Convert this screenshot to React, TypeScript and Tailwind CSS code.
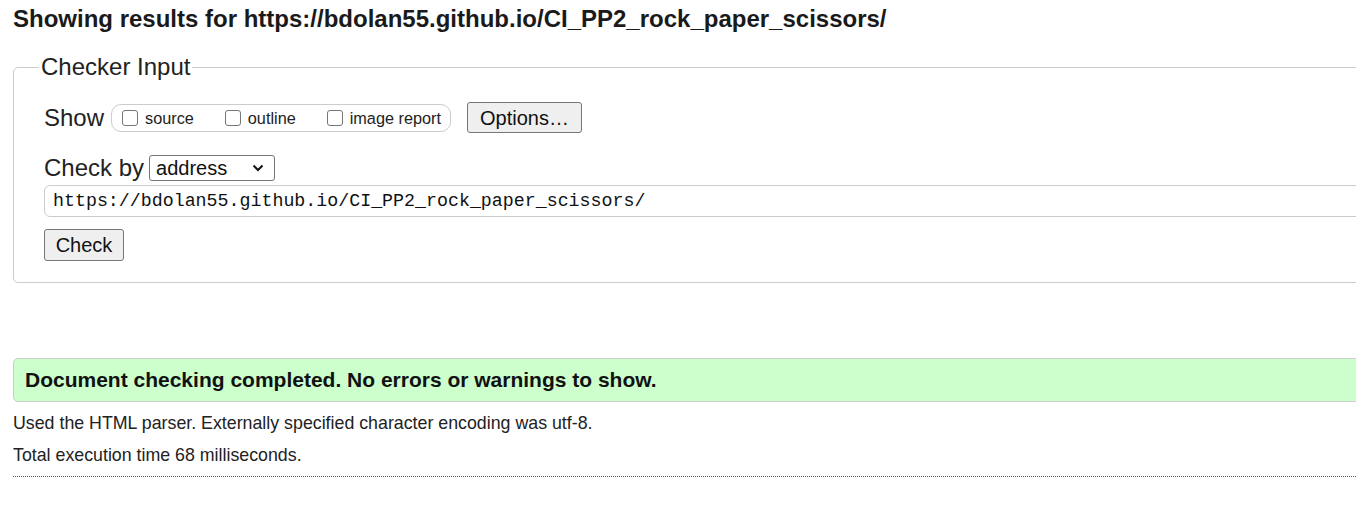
import React from 'react';

const Checkbox = ({ label }: { label: string }) => {
  return (
    <label className="flex items-end gap-[7px]">
      <span className="w-[16px] h-[16px] border border-[#767676] rounded-[3px] bg-white mb-[2px]"></span>
      <span className="text-[16.25px] leading-[20px] text-[#222]">{label}</span>
    </label>
  );
};

const App = () => {
  return (
    <div className="min-h-screen w-[1356px] overflow-hidden bg-white text-[#222] font-['Liberation_Sans',Arial,sans-serif]">
      <h1 className="pl-[13px] pt-[5px] text-[24px] leading-[28px] font-bold text-[#1a1a1a]">
        Showing results for https://bdolan55.github.io/CI_PP2_rock_paper_scissors/
      </h1>

      <fieldset className="ml-[13px] mt-[21px] w-[1380px] border border-[#ccc] rounded-[5px] pl-[30px] pr-4 pt-[22px] pb-[21px]">
        <legend className="-ml-[5px] px-[2px] text-[24px] leading-[26px]">Checker Input</legend>

        <div className="flex items-center">
          <span className="text-[24px] leading-[28px]">Show</span>
          <div className="ml-[7px] h-[28px] flex items-center gap-[31px] border border-[#ccc] rounded-[10px] pl-[10px] pr-[9px]">
            <Checkbox label="source" />
            <Checkbox label="outline" />
            <Checkbox label="image report" />
          </div>
          <button className="ml-[16px] h-[31px] px-[12px] bg-[#efefef] border border-[#767676] rounded-[3px] text-[20px] leading-[24px] text-[#111]">
            Options…
          </button>
        </div>

        <div className="flex items-center mt-[21px]">
          <span className="text-[24px] leading-[28px]">Check by</span>
          <div className="ml-[5px] w-[126px] h-[26px] flex items-center justify-between border border-[#767676] rounded-[3px] pl-[6px] pr-[10px] bg-white">
            <span className="text-[20px] leading-[22px] text-[#111]">address</span>
            <svg width="12" height="8" viewBox="0 0 12 8" fill="none">
              <path d="M1.5 1.5 L6 6 L10.5 1.5" stroke="#111" strokeWidth="2" />
            </svg>
          </div>
        </div>

        <div className="mt-[3px] h-[32px] flex items-center border border-[#ccc] rounded-[6px] pl-[8px]">
          <span className="font-['Liberation_Mono',monospace] text-[18.3px] leading-[22px] text-[#111]">
            https://bdolan55.github.io/CI_PP2_rock_paper_scissors/
          </span>
        </div>

        <button className="mt-[12px] h-[32px] w-[80px] bg-[#efefef] border border-[#767676] rounded-[3px] text-[20px] leading-[24px] text-[#111]">
          Check
        </button>
      </fieldset>

      <div className="ml-[13px] mt-[75px] w-[1380px] h-[44px] flex items-center bg-[#ccffcc] border border-[#ccc] rounded-[5px] pl-[11px]">
        <p className="text-[21px] leading-[24px] font-bold text-[#111]">
          Document checking completed. No errors or warnings to show.
        </p>
      </div>

      <p className="ml-[13px] mt-[11px] text-[17.8px] leading-[20px]">
        Used the HTML parser. Externally specified character encoding was utf-8.
      </p>
      <p className="ml-[13px] mt-[12px] text-[17.8px] leading-[20px]">
        Total execution time 68 milliseconds.
      </p>
      <div className="ml-[13px] mt-[11px] border-b border-dotted border-[#555]"></div>
    </div>
  );
};

export default App;
